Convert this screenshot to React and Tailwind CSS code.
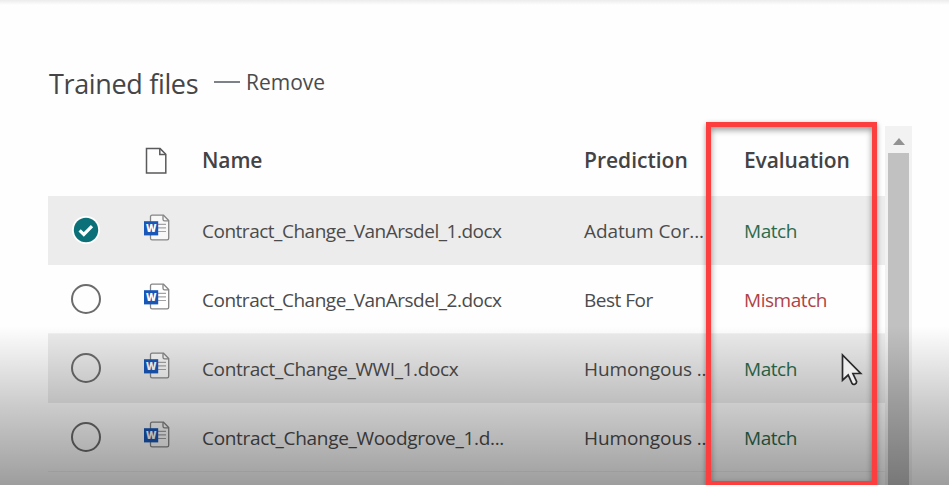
import React from "react";

const files = [
  { name: "Contract_Change_VanArsdel_1.docx", tracking: "tracking-[-0.49px]", prediction: "Adatum Cor...", match: true, selected: true },
  { name: "Contract_Change_VanArsdel_2.docx", tracking: "tracking-[-0.49px]", prediction: "Best For", match: false },
  { name: "Contract_Change_WWI_1.docx", tracking: "tracking-[-0.38px]", prediction: "Humongous ..", match: true },
  { name: "Contract_Change_Woodgrove_1.d...", tracking: "tracking-[-0.31px]", prediction: "Humongous ..", match: true },
];

function PageIcon() {
  return (
    <svg width="24" height="28" viewBox="0 0 24 28" fill="none" stroke="#5a5a5c" strokeWidth="1.5">
      <path d="M1.5 1.6h13.6l5.7 5.6v18.9H1.5z" />
      <path d="M14.8 1.6v5.8h6" />
    </svg>
  );
}

function WordIcon() {
  return (
    <svg width="28" height="28" viewBox="0 0 28 28" fill="none">
      <path d="M7.5 2.8q0-1.6 1.6-1.6h11.4l5.2 5.4v17.6q0 1.6-1.6 1.6h-15q-1.6 0-1.6-1.6z" fill="#fff" fillOpacity=".65" stroke="#858585" strokeWidth="1.3" />
      <path d="M20 1.2v4q0 1.6 1.6 1.6h4.1" stroke="#858585" strokeWidth="1.3" />
      <path d="M15 10.3h8M15 13.9h8M15 17.5h8" stroke="#a3a3a6" strokeWidth="1.2" />
      <rect x="1" y="7.2" width="14.2" height="14.2" fill="#1857b8" />
      <text x="8.1" y="18" textAnchor="middle" fontSize="10" fontWeight="800" fill="#fff" fontFamily="Open Sans, sans-serif">W</text>
    </svg>
  );
}

function SelectMark({ selected }) {
  if (!selected) {
    return <span className="h-[30px] w-[30px] rounded-full border-2 border-[#6c6c6c]" />;
  }
  return (
    <svg width="30" height="30" viewBox="0 0 30 30">
      <circle cx="15" cy="15" r="14" fill="#fff" />
      <circle cx="15" cy="15" r="12.2" fill="#0b7078" />
      <path d="M8.6 15.3l4.2 4.1 8.2-8.3" fill="none" stroke="#fff" strokeWidth="3.2" />
    </svg>
  );
}

const columns = "grid grid-cols-[94px_60px_382px_122px_1fr] items-center";

function FileRow({ file, striped }) {
  return (
    <div className={`${columns} h-[69px] ${striped ? "bg-[#edecec] pb-px" : "border-b border-[#f3f2f2]"}`}>
      <div className="flex pl-[23px]"><SelectMark selected={file.selected} /></div>
      <div className="pb-[5px] pl-[1px]"><WordIcon /></div>
      <div className={`pt-[3px] text-[19px] whitespace-nowrap ${file.tracking}`}>{file.name}</div>
      <div className={`pt-[3px] text-[19px] whitespace-nowrap ${file.match ? "tracking-[-0.1px]" : "tracking-[-0.5px]"}`}>{file.prediction}</div>
      <div className={`pt-[3px] pl-[38px] text-[19px] tracking-[-0.45px] ${file.match ? "text-[#2b6b4c]" : "text-[#ae4347]"}`}>
        {file.match ? "Match" : "Mismatch"}
      </div>
    </div>
  );
}

export default function App() {
  return (
    <main className="relative h-[485px] w-[949px] overflow-hidden bg-[#fefefe] font-['Open_Sans',sans-serif] text-[#4b4b4b]">
      <div className="h-[5px] bg-linear-to-b from-[#ececec] to-[#fefefe]" />
      <div className="flex h-[121px] items-start pt-[58px] pl-[49px]">
        <h1 className="w-[165px] pt-[2px] text-[27px] leading-[38px] tracking-[-0.35px] whitespace-nowrap text-[#454547]">Trained files</h1>
        <button className="flex items-center text-[21px] leading-[38px] text-[#4b4b4d]">
          <span className="mr-[6px] h-[2px] w-[26px] bg-[#7c8287]" />
          Remove
        </button>
      </div>
      <div className="flex h-[359px] pl-[48px]">
        <div className="w-[837px]">
          <div className={`${columns} h-[70px] text-[21px] font-semibold text-[#434345]`}>
            <div />
            <div className="pb-px pl-[3px]"><PageIcon /></div>
            <div className="tracking-[-0.1px]">Name</div>
            <div>Prediction</div>
            <div className="pl-[38px] tracking-[-0.1px]">Evaluation</div>
          </div>
          {files.map((file, index) => (
            <FileRow key={file.name} file={file} striped={index % 2 === 0} />
          ))}
        </div>
        <div className="flex w-[27px] flex-col items-center bg-[#f2f2f2]">
          <div className="flex h-[27px] items-center pt-[4px]">
            <svg width="12" height="7" viewBox="0 0 12 7"><path d="M0 7l6-7 6 7z" fill="#929292" /></svg>
          </div>
          <div className="w-[21px] flex-1 bg-[#c1c1c1]" />
        </div>
      </div>
      <div className="pointer-events-none absolute inset-x-0 top-[326px] bottom-0 bg-linear-to-b from-black/0 via-black/20 to-black/38" />
      <div className="absolute top-[122px] left-[706px] h-[364px] w-[171px] border-[5px] border-[#fd3e3e] shadow-[0_2px_5px_rgba(0,0,0,0.4),inset_0_3px_6px_rgba(0,0,0,0.4)]" />
      <svg className="absolute top-[353px] left-[840px]" width="24" height="34" viewBox="0 0 24 34">
        <path d="M2.5 2v25.2l5.7-5.2 3.9 8.5q1 1.5 2.8.7t1.7-2.7l-3.7-8h7.8z" fill="#ededed" stroke="#29292c" strokeWidth="1.7" />
      </svg>
    </main>
  );
}
